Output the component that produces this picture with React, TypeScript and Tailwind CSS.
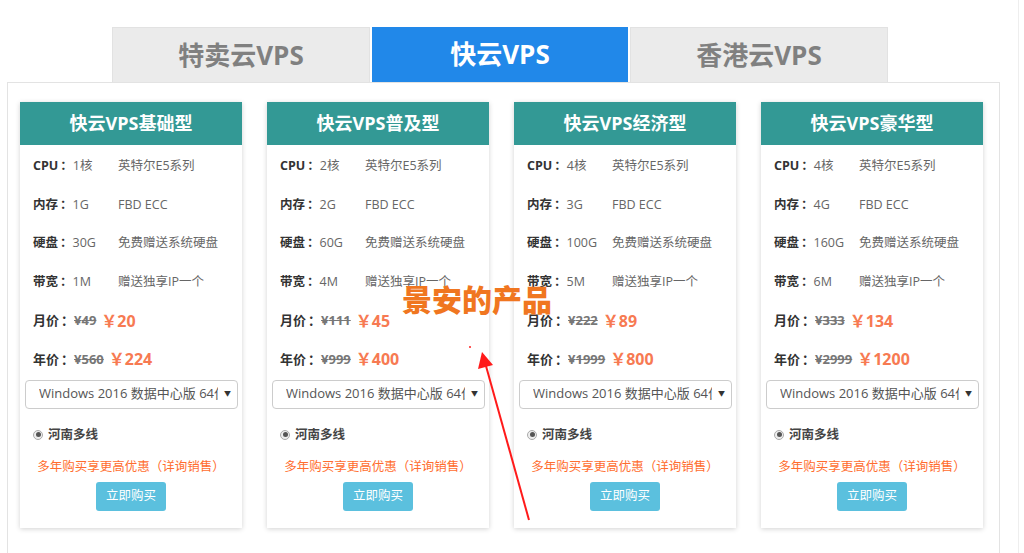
import React from 'react'

type Plan = {
  name: string
  cpu: string
  ram: string
  disk: string
  bw: string
  monthOld: string
  month: string
  yearOld: string
  year: string
}

const plans: Plan[] = [
  { name: '快云VPS基础型', cpu: '1核', ram: '1G', disk: '30G', bw: '1M', monthOld: '49', month: '20', yearOld: '560', year: '224' },
  { name: '快云VPS普及型', cpu: '2核', ram: '2G', disk: '60G', bw: '4M', monthOld: '111', month: '45', yearOld: '999', year: '400' },
  { name: '快云VPS经济型', cpu: '4核', ram: '3G', disk: '100G', bw: '5M', monthOld: '222', month: '89', yearOld: '1999', year: '800' },
  { name: '快云VPS豪华型', cpu: '4核', ram: '4G', disk: '160G', bw: '6M', monthOld: '333', month: '134', yearOld: '2999', year: '1200' },
]

const tabs = ['特卖云VPS', '快云VPS', '香港云VPS']

// full-width colon with a little room before it
const Colon = () => <span className="pl-[2px]">：</span>

const Spec = ({ label, value, note }: { label: string; value: string; note: string }) => (
  <div className="h-[38.6px] flex items-center text-[12.5px]">
    <span className="w-[85px] shrink-0 text-[#666]">
      <b className="text-[#333]">
        {label}
        <Colon />
      </b>
      {value}
    </span>
    <span className="text-[#666]">{note}</span>
  </div>
)

const Price = ({ label, old, now }: { label: string; old: string; now: string }) => (
  <div className="h-[38.6px] flex items-center">
    <b className="text-[13px] text-[#333]">
      {label}
      <Colon />
    </b>
    <span className="text-[13px] font-bold text-[#777] line-through">¥{old}</span>
    <span className="ml-[5px] text-[16px] font-bold text-[#f77a52]">￥{now}</span>
  </div>
)

const Card = ({ plan }: { plan: Plan }) => (
  <div className="w-[222px] bg-white shadow-[0_1px_5px_rgba(0,0,0,0.18)] pb-[17px]">
    <div className="h-[43px] bg-[#339995] flex items-center justify-center text-white text-[18px] font-bold">
      {plan.name}
    </div>
    <div className="px-[13px] pt-[2px]">
      <Spec label="CPU" value={plan.cpu} note="英特尔E5系列" />
      <Spec label="内存" value={plan.ram} note="FBD ECC" />
      <Spec label="硬盘" value={plan.disk} note="免费赠送系统硬盘" />
      <Spec label="带宽" value={plan.bw} note="赠送独享IP一个" />
      <Price label="月价" old={plan.monthOld} now={plan.month} />
      <Price label="年价" old={plan.yearOld} now={plan.year} />
    </div>
    <div className="ml-[5px] mr-[4px] mt-[1px] h-[29px] border border-[#ccc] rounded-[4px] flex items-center pl-[13px] pr-[6px] text-[13px] text-[#555]">
      <span className="w-[179px] overflow-hidden whitespace-nowrap">Windows 2016 数据中心版 64位</span>
      <span className="ml-auto text-[7px] text-[#333]">▼</span>
    </div>
    <div className="mt-[17px] px-[13px] flex items-center gap-[5px] text-[12.5px] font-bold text-[#444]">
      <span className="w-[10px] h-[10px] rounded-full border border-[#aaa] bg-[#eee] flex items-center justify-center">
        <span className="w-[5px] h-[5px] rounded-full bg-[#555]" />
      </span>
      河南多线
    </div>
    <div className="mt-[14px] text-center text-[12.5px] text-[#ff6d2e]">多年购买享更高优惠（详询销售）</div>
    <div className="mt-[5px] flex justify-center">
      <button className="w-[70px] h-[29px] rounded-[3px] bg-[#5bc0de] text-white text-[12.5px]">立即购买</button>
    </div>
  </div>
)

export default function App() {
  return (
    <div
      className="relative w-[1024px] h-[553px] overflow-hidden bg-white"
      style={{ fontFamily: '"Open Sans", "Noto Sans CJK SC", sans-serif' }}
    >
      <div className="w-[1019px] h-full border-r border-[#eeeeee] pl-[7px] pt-[27px]">
        {/* tab strip */}
        <div className="flex gap-[2px] pl-[105px]">
          {tabs.map((t, i) => (
            <div
              key={t}
              className={
                i === 1
                  ? 'w-[256px] h-[55px] bg-[#2188e9] text-white flex items-center justify-center text-[26px] font-bold'
                  : 'w-[258px] h-[55px] bg-[#ebebeb] border border-[#e2e2e2] border-b-0 text-[#808080] flex items-center justify-center text-[26px] font-bold'
              }
            >
              {t}
            </div>
          ))}
        </div>

        {/* plan panel */}
        <div className="w-[993px] h-[500px] border border-[#e3e3e3] pl-[12px] pt-[19px] flex items-start gap-[25px]">
          {plans.map((p) => (
            <Card key={p.name} plan={p} />
          ))}
        </div>
      </div>

      {/* hand-drawn note over the panel */}
      <div className="absolute left-[402px] top-[285px] text-[30px] font-black text-[#f07620] leading-none">景安的产品</div>
      <svg className="absolute left-0 top-0" width="1024" height="553">
        <circle cx="470" cy="347" r="1" fill="#ff2020" />
        <line x1="529" y1="520" x2="486" y2="366" stroke="#ff1a1a" strokeWidth="2" />
        <polygon points="482,352 478,369 493,365" fill="#ff1a1a" />
      </svg>
    </div>
  )
}
